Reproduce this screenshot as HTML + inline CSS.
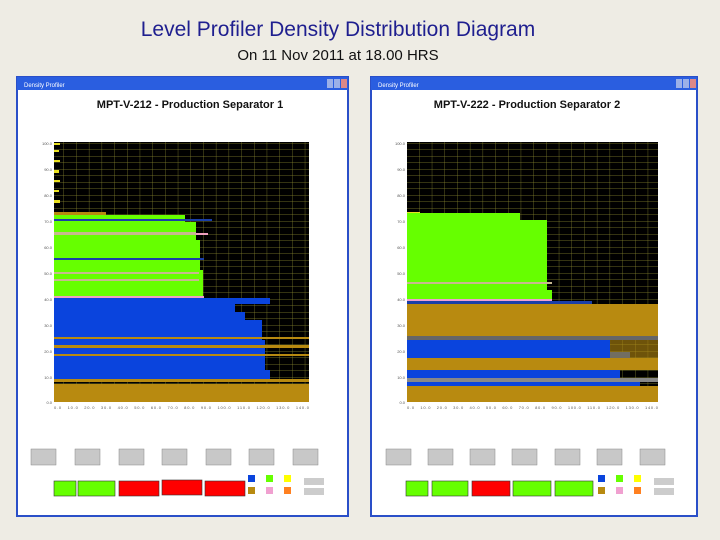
<!DOCTYPE html>
<html><head><meta charset="utf-8"><style>
body{margin:0;width:720px;height:540px;background:#eeece4;font-family:"Liberation Sans",sans-serif;overflow:hidden;position:relative}
.t{position:absolute;left:0;width:676px;text-align:center;color:#1f1f8f}
</style></head><body>
<div class="t" style="top:18px;font-size:21px;">Level Profiler Density Distribution Diagram</div>
<div class="t" style="top:47px;font-size:15px;color:#111">On 11 Nov 2011 at 18.00 HRS</div>
<svg width="720" height="540" style="position:absolute;left:0;top:0" font-family="Liberation Sans">
<defs>
<pattern id="g" width="12.7" height="6.5" patternUnits="userSpaceOnUse"><rect width="12.7" height="6.5" fill="#000"/><path d="M0 0H12.7M0 0V6.5" stroke="#8a8830" stroke-width="0.7"/></pattern>
</defs>
<!-- left window -->
<rect x="17" y="77" width="331" height="439" fill="#fff" stroke="#2a4fc8" stroke-width="2"/>
<rect x="17" y="77" width="331" height="13" fill="#2a5ee0"/>
<text x="24" y="87" font-size="6" fill="#fff">Density Profiler</text>
<rect x="327" y="79" width="6" height="9" fill="#9bb0e8"/><rect x="334" y="79" width="6" height="9" fill="#9bb0e8"/><rect x="341" y="79" width="6" height="9" fill="#d88"/>
<text x="190" y="108" font-size="11" font-weight="bold" text-anchor="middle" fill="#111">MPT-V-212 - Production Separator 1</text>
<g font-size="4" fill="#555" text-anchor="end"><text x="52" y="145">100.0</text><text x="52" y="171">90.0</text><text x="52" y="197">80.0</text><text x="52" y="223">70.0</text><text x="52" y="249">60.0</text><text x="52" y="275">50.0</text><text x="52" y="301">40.0</text><text x="52" y="327">30.0</text><text x="52" y="353">20.0</text><text x="52" y="379">10.0</text><text x="52" y="404">0.0</text></g>
<rect x="54" y="142" width="255" height="260" fill="url(#g)"/>
<g fill="#e8e020"><rect x="54" y="143" width="6" height="2"/><rect x="54" y="150" width="5" height="2"/><rect x="54" y="160" width="6" height="2"/><rect x="54" y="170" width="5" height="3"/><rect x="54" y="180" width="6" height="2"/><rect x="54" y="190" width="5" height="2"/><rect x="54" y="200" width="6" height="3"/></g>
<rect x="54" y="212" width="52" height="3" fill="#b88a10"/>
<path d="M54 215H185V222H196V240H200V270H203V297H54Z" fill="#66ff00"/>
<rect x="54" y="219" width="158" height="2" fill="#1a3fa8"/>
<rect x="54" y="232" width="142" height="3" fill="#c8b890"/><rect x="196" y="233" width="12" height="2" fill="#f0a0c0"/>
<rect x="54" y="258" width="150" height="2" fill="#1a3fa8"/>
<rect x="54" y="272" width="145" height="2" fill="#c8b890"/><rect x="54" y="279" width="145" height="2" fill="#c8b890"/>
<rect x="54" y="296" width="150" height="2" fill="#f0a0c0"/>
<path d="M54 298H270V304H235V312H245V320H262V340H265V370H270V380H54Z" fill="#0a44dd"/>
<rect x="54" y="337" width="255" height="2" fill="#b88a10"/><rect x="54" y="345" width="255" height="3" fill="#b88a10"/><rect x="54" y="354" width="255" height="2" fill="#b88a10"/><rect x="54" y="379" width="255" height="3" fill="#b88a10"/>
<rect x="54" y="384" width="255" height="18" fill="#b88a10"/>
<text x="54" y="409" font-size="4" fill="#555" textLength="255">0.0 &#160; 10.0 &#160; 20.0 &#160; 30.0 &#160; 40.0 &#160; 50.0 &#160; 60.0 &#160; 70.0 &#160; 80.0 &#160; 90.0 &#160; 100.0 &#160; 110.0 &#160; 120.0 &#160; 130.0 &#160; 140.0</text>
<g fill="#c8c8c8" stroke="#888" stroke-width="0.5"><rect x="31" y="449" width="25" height="16"/><rect x="75" y="449" width="25" height="16"/><rect x="119" y="449" width="25" height="16"/><rect x="162" y="449" width="25" height="16"/><rect x="206" y="449" width="25" height="16"/><rect x="249" y="449" width="25" height="16"/><rect x="293" y="449" width="25" height="16"/></g>
<rect x="54" y="481" width="22" height="15" fill="#66ff00" stroke="#333" stroke-width="0.6"/>
<rect x="78" y="481" width="37" height="15" fill="#66ff00" stroke="#333" stroke-width="0.6"/>
<rect x="119" y="481" width="40" height="15" fill="#ff0000" stroke="#333" stroke-width="0.6"/>
<rect x="162" y="480" width="40" height="15" fill="#ff0000" stroke="#333" stroke-width="0.6"/>
<rect x="205" y="481" width="40" height="15" fill="#ff0000" stroke="#333" stroke-width="0.6"/>
<rect x="248" y="475" width="7" height="7" fill="#0a44dd"/><rect x="266" y="475" width="7" height="7" fill="#66ff00"/><rect x="284" y="475" width="7" height="7" fill="#ffff00"/>
<rect x="248" y="487" width="7" height="7" fill="#b88a10"/><rect x="266" y="487" width="7" height="7" fill="#f0a0d0"/><rect x="284" y="487" width="7" height="7" fill="#ff8020"/>
<rect x="304" y="478" width="20" height="7" fill="#ccc"/><rect x="304" y="488" width="20" height="7" fill="#ccc"/>
<!-- right window -->
<rect x="371" y="77" width="326" height="439" fill="#fff" stroke="#2a4fc8" stroke-width="2"/>
<rect x="371" y="77" width="326" height="13" fill="#2a5ee0"/>
<text x="378" y="87" font-size="6" fill="#fff">Density Profiler</text>
<rect x="676" y="79" width="6" height="9" fill="#9bb0e8"/><rect x="683" y="79" width="6" height="9" fill="#9bb0e8"/><rect x="690" y="79" width="6" height="9" fill="#d88"/>
<text x="527" y="108" font-size="11" font-weight="bold" text-anchor="middle" fill="#111">MPT-V-222 - Production Separator 2</text>
<g font-size="4" fill="#555" text-anchor="end"><text x="405" y="145">100.0</text><text x="405" y="171">90.0</text><text x="405" y="197">80.0</text><text x="405" y="223">70.0</text><text x="405" y="249">60.0</text><text x="405" y="275">50.0</text><text x="405" y="301">40.0</text><text x="405" y="327">30.0</text><text x="405" y="353">20.0</text><text x="405" y="379">10.0</text><text x="405" y="404">0.0</text></g>
<rect x="407" y="142" width="251" height="260" fill="url(#g)"/>
<rect x="407" y="212" width="13" height="2" fill="#e8e020"/>
<path d="M407 213H520V220H547V290H552V300H407Z" fill="#66ff00"/>
<rect x="407" y="282" width="145" height="2" fill="#c8b890"/><rect x="407" y="299" width="145" height="2" fill="#f0a0d0"/>
<rect x="407" y="301" width="185" height="3" fill="#1a3fa8"/>
<rect x="407" y="304" width="251" height="32" fill="#b88a10"/>
<rect x="407" y="336" width="251" height="4" fill="#666"/>
<path d="M407 340H610V352H630V358H407Z" fill="#0a44dd"/>
<rect x="610" y="340" width="48" height="18" fill="#b88a10" opacity=".6"/>
<rect x="407" y="358" width="251" height="12" fill="#b88a10"/>
<path d="M407 370H620V378H407Z" fill="#0a44dd"/>
<rect x="407" y="378" width="251" height="4" fill="#888"/>
<path d="M407 382H640V386H407Z" fill="#0a44dd"/>
<rect x="407" y="386" width="251" height="16" fill="#b88a10"/>
<text x="407" y="409" font-size="4" fill="#555" textLength="251">0.0 &#160; 10.0 &#160; 20.0 &#160; 30.0 &#160; 40.0 &#160; 50.0 &#160; 60.0 &#160; 70.0 &#160; 80.0 &#160; 90.0 &#160; 100.0 &#160; 110.0 &#160; 120.0 &#160; 130.0 &#160; 140.0</text>
<g fill="#c8c8c8" stroke="#888" stroke-width="0.5"><rect x="386" y="449" width="25" height="16"/><rect x="428" y="449" width="25" height="16"/><rect x="470" y="449" width="25" height="16"/><rect x="512" y="449" width="25" height="16"/><rect x="555" y="449" width="25" height="16"/><rect x="597" y="449" width="25" height="16"/><rect x="640" y="449" width="25" height="16"/></g>
<rect x="406" y="481" width="22" height="15" fill="#66ff00" stroke="#333" stroke-width="0.6"/>
<rect x="432" y="481" width="36" height="15" fill="#66ff00" stroke="#333" stroke-width="0.6"/>
<rect x="472" y="481" width="38" height="15" fill="#ff0000" stroke="#333" stroke-width="0.6"/>
<rect x="513" y="481" width="38" height="15" fill="#66ff00" stroke="#333" stroke-width="0.6"/>
<rect x="555" y="481" width="38" height="15" fill="#66ff00" stroke="#333" stroke-width="0.6"/>
<rect x="598" y="475" width="7" height="7" fill="#0a44dd"/><rect x="616" y="475" width="7" height="7" fill="#66ff00"/><rect x="634" y="475" width="7" height="7" fill="#ffff00"/>
<rect x="598" y="487" width="7" height="7" fill="#b88a10"/><rect x="616" y="487" width="7" height="7" fill="#f0a0d0"/><rect x="634" y="487" width="7" height="7" fill="#ff8020"/>
<rect x="654" y="478" width="20" height="7" fill="#ccc"/><rect x="654" y="488" width="20" height="7" fill="#ccc"/>
</svg>
</body></html>
